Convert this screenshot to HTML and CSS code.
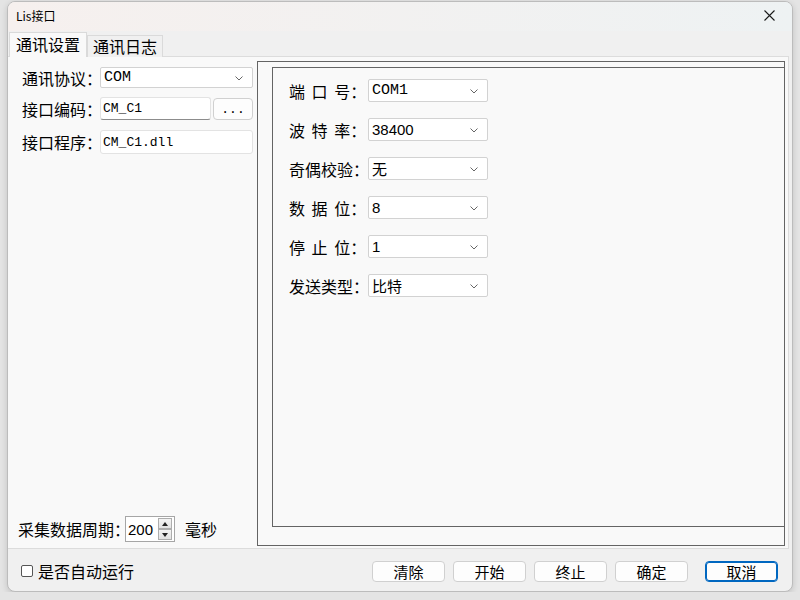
FILE: index.html
```html
<!DOCTYPE html>
<html lang="zh-CN">
<head>
    <meta charset="UTF-8">
    <title>Lis接口</title>
    <link rel="stylesheet" href="styles.css">
</head>
<body>
    <div class="window">
        <div class="titlebar">
            <span class="title">Lis接口</span>
            <svg class="close" width="11" height="11" viewBox="0 0 11 11">
                <path d="M0.5 0.5 L10.5 10.5 M10.5 0.5 L0.5 10.5" stroke="#1a1a1a" stroke-width="1.1" fill="none"/>
            </svg>
        </div>

        <div class="tabs">
            <div class="tab active">通讯设置</div>
            <div class="tab">通讯日志</div>
        </div>

        <div class="page">
            <div class="left">
                <div class="field row1">
                    <span class="label">通讯协议：</span>
                    <div class="combo wide mono">COM
                        <svg class="chevron" width="8" height="5" viewBox="0 0 8 5"><path d="M0.5 0.5 L4 4 L7.5 0.5" stroke="#666" fill="none"/></svg>
                    </div>
                </div>
                <div class="field row2">
                    <span class="label">接口编码：</span>
                    <div class="input short mono">CM_C1</div>
                    <button class="browse">...</button>
                </div>
                <div class="field row3">
                    <span class="label">接口程序：</span>
                    <div class="input wide mono">CM_C1.dll</div>
                </div>

                <div class="period">
                    <span class="label">采集数据周期：</span>
                    <div class="spin">
                        <span class="spin-value">200</span>
                        <div class="spin-btns">
                            <span class="spin-btn"><svg width="6" height="4" viewBox="0 0 6 4"><path d="M3 0 L6 4 L0 4 Z" fill="#222"/></svg></span>
                            <span class="spin-btn"><svg width="6" height="4" viewBox="0 0 6 4"><path d="M0 0 L6 0 L3 4 Z" fill="#222"/></svg></span>
                        </div>
                    </div>
                    <span class="unit">毫秒</span>
                </div>
            </div>

            <div class="group">
                <div class="group-inner">
                    <div class="setting">
                        <span class="label spaced">端 口 号：</span>
                        <div class="combo mono">COM1<svg class="chevron" width="8" height="5" viewBox="0 0 8 5"><path d="M0.5 0.5 L4 4 L7.5 0.5" stroke="#666" fill="none"/></svg></div>
                    </div>
                    <div class="setting">
                        <span class="label spaced">波 特 率：</span>
                        <div class="combo sans">38400<svg class="chevron" width="8" height="5" viewBox="0 0 8 5"><path d="M0.5 0.5 L4 4 L7.5 0.5" stroke="#666" fill="none"/></svg></div>
                    </div>
                    <div class="setting">
                        <span class="label">奇偶校验：</span>
                        <div class="combo">无<svg class="chevron" width="8" height="5" viewBox="0 0 8 5"><path d="M0.5 0.5 L4 4 L7.5 0.5" stroke="#666" fill="none"/></svg></div>
                    </div>
                    <div class="setting">
                        <span class="label spaced">数 据 位：</span>
                        <div class="combo sans">8<svg class="chevron" width="8" height="5" viewBox="0 0 8 5"><path d="M0.5 0.5 L4 4 L7.5 0.5" stroke="#666" fill="none"/></svg></div>
                    </div>
                    <div class="setting">
                        <span class="label spaced">停 止 位：</span>
                        <div class="combo sans">1<svg class="chevron" width="8" height="5" viewBox="0 0 8 5"><path d="M0.5 0.5 L4 4 L7.5 0.5" stroke="#666" fill="none"/></svg></div>
                    </div>
                    <div class="setting">
                        <span class="label">发送类型：</span>
                        <div class="combo">比特<svg class="chevron" width="8" height="5" viewBox="0 0 8 5"><path d="M0.5 0.5 L4 4 L7.5 0.5" stroke="#666" fill="none"/></svg></div>
                    </div>
                </div>
            </div>
        </div>

        <div class="footer">
            <label class="check"><span class="box"></span>是否自动运行</label>
            <div class="buttons">
                <button class="btn">清除</button>
                <button class="btn">开始</button>
                <button class="btn">终止</button>
                <button class="btn">确定</button>
                <button class="btn default">取消</button>
            </div>
        </div>
    </div>
</body>
</html>
```

FILE: styles.css
```css
* {
    box-sizing: border-box;
}
body {
    margin: 0;
    background-color: #e4e4e4;
    font-family: "Noto Sans CJK SC", "Liberation Sans", sans-serif;
    color: #000;
}
.window {
    margin: 1px 0 0 7px;
    width: 786px;
    height: 591px;
    border: 1px solid #bcbcbc;
    border-radius: 8px;
    overflow: hidden;
    background-color: #f0f0f0;
    display: flex;
    flex-direction: column;
    box-shadow: 0 2px 6px rgba(0, 0, 0, 0.15);
}
.titlebar {
    height: 29px;
    flex: none;
    display: flex;
    align-items: center;
    justify-content: space-between;
    padding: 0 17px 0 8px;
    background: linear-gradient(to right, #f6f0ee, #eef2f3);
}
.title {
    font-size: 12px;
    line-height: 14px;
    margin-top: -2px;
}
.close {
    margin-top: -2px;
}
.tabs {
    height: 25px;
    flex: none;
    display: flex;
    align-items: flex-end;
    padding-left: 1px;
}
.tab {
    height: 22px;
    font-size: 16px;
    line-height: 20px;
    padding: 0 5px;
    border: 1px solid #dadada;
    border-bottom: none;
    background-color: #f0f0f0;
    margin-bottom: -1px;
    position: relative;
}
.tab.active {
    height: 25px;
    width: 78px;
    padding: 0 6px;
    line-height: 22px;
    background-color: #f9f9f9;
    z-index: 1;
}
.page {
    height: 493px;
    flex: none;
    margin-right: 3px;
    background-color: #f9f9f9;
    border: 1px solid #dcdcdc;
    border-left: none;
    display: flex;
}
.left {
    width: 249px;
    flex: none;
    padding: 10px 4px 6px 14px;
    display: flex;
    flex-direction: column;
}
.label {
    font-size: 16px;
    line-height: 18px;
    white-space: nowrap;
    flex: none;
    overflow: visible;
}
.field {
    display: flex;
    align-items: center;
}
.field .label {
    width: 78px;
}
.row1 {
    height: 21px;
}
.row2 {
    height: 23px;
    margin-top: 9px;
}
.row3 {
    height: 24px;
    margin-top: 10px;
}
.mono {
    font-family: "Liberation Mono", "Noto Sans CJK SC", monospace;
    font-size: 13px;
}
.sans {
    font-family: "Liberation Sans", sans-serif;
    font-size: 14px;
}
.combo {
    position: relative;
    height: 100%;
    width: 120px;
    background: #fff;
    border: 1px solid #d2d2d2;
    border-radius: 2px;
    display: flex;
    align-items: center;
    padding-left: 3px;
    font-size: 15px;
}
.combo.wide {
    width: 153px;
}
.chevron {
    position: absolute;
    right: 9px;
    top: 50%;
    margin-top: -2px;
}
.input {
    height: 100%;
    background: #fff;
    border: 1px solid #e3e3e3;
    border-bottom-color: #8c8c8c;
    border-radius: 3px;
    display: flex;
    align-items: center;
    padding-left: 2px;
}
.input.short {
    width: 111px;
}
.input.wide {
    width: 153px;
    border-bottom-color: #e3e3e3;
}
.browse {
    width: 40px;
    height: 22px;
    margin-left: 2px;
    background: #fdfdfd;
    border: 1px solid #d0d0d0;
    border-radius: 4px;
    font-family: "Liberation Mono", monospace;
    font-size: 13px;
    padding: 0;
    line-height: 22px;
}
.period {
    margin-top: auto;
    margin-left: -4px;
    display: flex;
    align-items: center;
}
.period .label {
    width: 107px;
}
.spin {
    width: 50px;
    height: 26px;
    border: 1px solid #a6a6a6;
    background: #fff;
    display: flex;
    align-items: center;
    justify-content: space-between;
    padding: 0 2px 0 2px;
}
.spin-value {
    font-family: "Liberation Sans", sans-serif;
    font-size: 15px;
}
.spin-btns {
    display: flex;
    flex-direction: column;
}
.spin-btn {
    width: 14px;
    height: 11px;
    border: 1px solid #adadad;
    background: linear-gradient(#f4f4f4, #e2e2e2);
    display: flex;
    align-items: center;
    justify-content: center;
}
.unit {
    font-size: 16px;
    margin-left: 10px;
}
.group {
    flex: 1;
    margin: 4px 3px 2px 0;
    border: 1px solid #646464;
    padding: 5px 0 18px 14px;
    display: flex;
}
.group-inner {
    flex: 1;
    border: 1px solid #646464;
    border-right: none;
    padding: 11px 0 0 16px;
    display: flex;
    flex-direction: column;
    gap: 16px;
}
.setting {
    height: 23px;
    display: flex;
    align-items: center;
}
.setting .label {
    width: 79px;
}
.spaced {
    word-spacing: 3px;
}
.footer {
    flex: 1;
    display: flex;
    align-items: center;
    justify-content: space-between;
    padding: 2px 14px 0 13px;
}
.check {
    display: flex;
    align-items: center;
    font-size: 16px;
    line-height: 18px;
}
.box {
    width: 12px;
    height: 12px;
    border: 1px solid #555;
    border-radius: 2px;
    background: #fff;
    margin-right: 5px;
}
.buttons {
    display: flex;
}
.btn {
    width: 73px;
    height: 21px;
    margin-left: 8px;
    padding: 0;
    background: #fdfdfd;
    border: 1px solid #d0d0d0;
    border-radius: 4px;
    font-family: "Noto Sans CJK SC", sans-serif;
    font-size: 15px;
    line-height: 19px;
    color: #000;
}
.btn.default {
    margin-left: 17px;
    border: 1px solid #0067c0;
    box-shadow: inset 0 0 0 1px #0067c0;
}
```
